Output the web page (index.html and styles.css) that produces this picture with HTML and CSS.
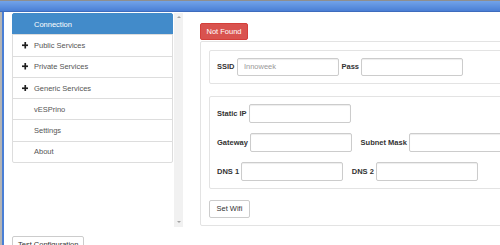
FILE: index.html
```html
<!DOCTYPE html>
<html lang="en">
<head>
  <meta charset="UTF-8" />
  <meta name="viewport" content="width=device-width, initial-scale=1.0"/>
  <title>vESPrino Configuration</title>
  <link rel="stylesheet" href="styles.css">
</head>
<body>
<div class="titlebar"></div>
<div class="window">
  <div class="edge"></div>
  <div class="page">
    <div class="layout">
      <aside class="sidebar">
        <nav class="nav">
          <a class="nav-item active"><span class="nav-icon"></span>Connection</a>
          <a class="nav-item"><span class="nav-icon"><svg class="plus" viewBox="0 0 7 7"><rect x="2.6" y="0" width="1.8" height="7"/><rect x="0" y="2.6" width="7" height="1.8"/></svg></span>Public Services</a>
          <a class="nav-item"><span class="nav-icon"><svg class="plus" viewBox="0 0 7 7"><rect x="2.6" y="0" width="1.8" height="7"/><rect x="0" y="2.6" width="7" height="1.8"/></svg></span>Private Services</a>
          <a class="nav-item"><span class="nav-icon"><svg class="plus" viewBox="0 0 7 7"><rect x="2.6" y="0" width="1.8" height="7"/><rect x="0" y="2.6" width="7" height="1.8"/></svg></span>Generic Services</a>
          <a class="nav-item"><span class="nav-icon"></span>vESPrino</a>
          <a class="nav-item"><span class="nav-icon"></span>Settings</a>
          <a class="nav-item"><span class="nav-icon"></span>About</a>
        </nav>
        <div class="scrollbar">
          <span class="arrow up"></span>
          <span class="arrow down"></span>
        </div>
      </aside>

      <main class="content">
        <button class="btn btn-danger">Not Found</button>
        <div class="panel">
          <div class="group compact">
            <div class="row">
              <div class="pair"><label>SSID</label><input type="text" placeholder="Innoweek" /></div>
              <div class="pair"><label>Pass</label><input type="password" /></div>
            </div>
          </div>

          <div class="group stacked">
            <div class="row">
              <div class="pair"><label>Static IP</label><input type="text" /></div>
            </div>
            <div class="row">
              <div class="pair"><label>Gateway</label><input type="text" /></div>
              <div class="pair"><label>Subnet Mask</label><input type="text" /></div>
            </div>
            <div class="row">
              <div class="pair"><label>DNS 1</label><input type="text" /></div>
              <div class="pair"><label>DNS 2</label><input type="text" /></div>
            </div>
          </div>

          <button class="btn btn-default set-wifi">Set Wifi</button>
        </div>
      </main>
    </div>

    <button class="btn btn-default test-config">Test Configuration</button>
  </div>
</div>
</body>
</html>
```

FILE: styles.css
```css
:root {
  --blue: #428bca;
  --red: #d9534f;
  --border: #ddd;
  --panel-border: #e3e3e3;
  --text: #333;
  --text-muted: #555;
}

html, body {
  margin: 0;
  height: 100%;
  overflow: hidden;
}

body {
  font-family: "Liberation Sans", Arial, sans-serif;
  font-size: 7.5px;
  color: var(--text);
  background: #fff;
}

.titlebar {
  height: 10px;
  border-top: 1px solid #8e8e8e;
  border-bottom: 1px solid #3e6cbd;
  background: linear-gradient(to bottom, #72a3e9, #4a7fd5);
}

.window {
  display: flex;
  height: calc(100% - 12px);
}

.edge {
  flex: none;
  width: 2px;
  background: #b4b4b4;
  border-right: 2px solid #4a7fd5;
}

.page {
  flex: none;
  padding: 1px 0 0 8px;
}

.layout {
  display: flex;
}

.sidebar {
  flex: none;
  display: flex;
  gap: 1px;
  height: 214px;
}

.nav {
  width: 161px;
  align-self: flex-start;
}

.nav-item {
  display: flex;
  align-items: center;
  box-sizing: border-box;
  height: 22.3px;
  margin-bottom: -1px;
  padding-left: 8.5px;
  border: 1px solid var(--border);
  color: var(--text-muted);
  background: #fff;
}

.nav-item:first-child {
  border-radius: 2px 2px 0 0;
}

.nav-item:last-child {
  margin-bottom: 0;
  border-radius: 0 0 2px 2px;
}

.nav-item.active {
  background: var(--blue);
  border-color: var(--blue);
  color: #fff;
}

.nav-icon {
  flex: none;
  display: flex;
  width: 12.5px;
}

.plus {
  width: 6.5px;
  height: 6.5px;
  fill: #1f1f1f;
}

.scrollbar {
  width: 9px;
  background: #f1f1f1;
  display: flex;
  flex-direction: column;
  justify-content: space-between;
  align-items: center;
  padding: 3px 0 4px;
  box-sizing: border-box;
}

.arrow {
  width: 0;
  height: 0;
  border-left: 2px solid transparent;
  border-right: 2px solid transparent;
}

.arrow.up {
  border-bottom: 2px solid #a3a3a3;
}

.arrow.down {
  border-top: 2px solid #a3a3a3;
}

.content {
  flex: none;
  width: 340px;
  margin-left: 17px;
  padding-top: 10px;
}

.btn {
  display: block;
  box-sizing: border-box;
  margin: 0;
  font-family: inherit;
  font-size: inherit;
  border-radius: 2px;
  cursor: pointer;
}

.btn-danger {
  height: 17px;
  padding: 0 5.5px;
  background: var(--red);
  border: 1px solid #d43f3a;
  color: #fff;
}

.btn-default {
  height: 17.4px;
  padding: 0 6.5px;
  background: #fff;
  border: 1px solid #ccc;
  color: var(--text);
}

.panel {
  margin-top: 0.5px;
  padding: 8.5px 8px 7.5px;
  border: 1px solid var(--panel-border);
  border-radius: 2px;
}

.group {
  border: 1px solid var(--panel-border);
  border-radius: 2px;
}

.group + .group {
  margin-top: 11.5px;
}

.compact {
  padding: 6.7px 7px 7px;
}

.stacked {
  padding: 7.6px 7px 7.3px;
}

.row {
  display: flex;
  gap: 8.3px;
}

.compact .row {
  gap: 2.6px;
}

.stacked .row + .row {
  margin-top: 10.6px;
}

.pair {
  display: flex;
  align-items: center;
  gap: 2.4px;
}

label {
  font-weight: bold;
  white-space: nowrap;
}

input {
  box-sizing: border-box;
  width: 102px;
  height: 18.4px;
  margin: 0;
  padding: 0 6px;
  font-family: inherit;
  font-size: inherit;
  color: var(--text-muted);
  border: 1px solid #ccc;
  border-radius: 2px;
  box-shadow: inset 0 1px 1px rgba(0, 0, 0, 0.075);
}

input::placeholder {
  color: #999;
}

.set-wifi {
  margin-top: 11.3px;
}

.test-config {
  margin-top: 9px;
  padding: 0 5px;
}
```
